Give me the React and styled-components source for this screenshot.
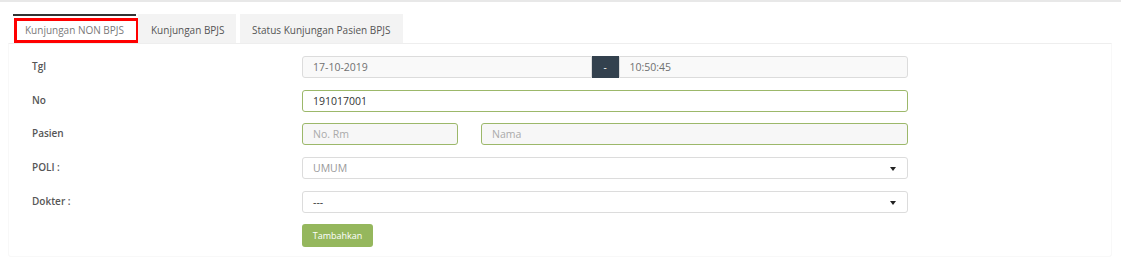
import React from "react";
import styled, { createGlobalStyle } from "styled-components";

const GlobalStyle = createGlobalStyle`
  html, body {
    margin: 0;
    padding: 0;
    background: #fff;
    font-family: "Open Sans", "Noto Sans", sans-serif;
  }
`;

const Page = styled.div`
  width: 1121px;
  height: 258px;
  box-sizing: border-box;
  border-top: 2px solid #e8e8e8;
  padding: 12px 9px 0 8px;
`;

const TabBar = styled.ul`
  display: flex;
  list-style: none;
  margin: 0;
  padding: 0 0 0 5px;
  gap: 2px;
`;

const Tab = styled.li`
  position: relative;
  box-sizing: border-box;
  width: ${(p) => p.$w}px;
  height: 29px;
  margin-right: ${(p) => p.$gap || 0}px;
  display: flex;
  align-items: center;
  padding-left: ${(p) => p.$pad}px;
  font-size: 10px;
  white-space: nowrap;
  background: ${(p) => (p.$active ? "#fff" : "#f3f3f3")};
  border-top: 2px solid ${(p) => (p.$active ? "#333" : "#f3f3f3")};
  color: ${(p) => (p.$active ? "#7a7a7a" : "#555")};
`;

const Highlight = styled.span`
  position: absolute;
  left: 1px;
  top: 2px;
  width: 125px;
  height: 25px;
  box-sizing: border-box;
  border: 3px solid #f00;
`;

const Panel = styled.div`
  box-sizing: border-box;
  height: 214px;
  border: 1px solid #f8f8f8;
  border-top-color: #eeeeee;
  border-radius: 0 0 3px 3px;
  padding: 12px 24px 0 23px;
`;

const Form = styled.div`
  display: grid;
  grid-template-columns: 270px 606px;
  row-gap: 11.7px;
  align-items: center;
`;

const Label = styled.label`
  font-size: 10px;
  font-weight: 600;
  color: #565656;
  margin-top: -2px;
`;

const Group = styled.div`
  display: flex;
  gap: ${(p) => p.$gap || 0}px;
`;

const Input = styled.div`
  box-sizing: border-box;
  height: 22px;
  flex: ${(p) => (p.$w ? `0 0 ${p.$w}px` : "1")};
  display: flex;
  align-items: center;
  padding-left: 10px;
  font-size: 10.5px;
  background: ${(p) => (p.$bg ? p.$bg : "#f9f9f9")};
  border: 1px solid ${(p) => (p.$ok ? "#9cb86a" : "#dcdcdc")};
  border-radius: ${(p) => p.$radius || "3px"};
  color: ${(p) => p.$color || "#707070"};
`;

const Addon = styled.div`
  width: 27px;
  height: 22px;
  display: flex;
  align-items: center;
  justify-content: center;
  background: #33414e;
  color: #fff;
  font-size: 10px;
`;

const Select = styled(Input)`
  position: relative;
  background: #fff;
  &::after {
    content: "";
    position: absolute;
    right: 11px;
    top: 9px;
    border-left: 3.5px solid transparent;
    border-right: 3.5px solid transparent;
    border-top: 4px solid #222;
  }
`;

const Button = styled.button`
  grid-column: 2;
  justify-self: start;
  height: 23px;
  width: 71px;
  border: 0;
  border-radius: 3px;
  background: #95b75d;
  color: #fff;
  font-family: inherit;
  font-size: 9px;
  padding: 0;
`;

export default function App() {
  return (
    <Page>
      <GlobalStyle />
      <TabBar>
        <Tab $active $w={123} $pad={12}>
          Kunjungan NON BPJS
          <Highlight />
        </Tab>
        <Tab $w={98} $pad={13} $gap={2}>
          Kunjungan BPJS
        </Tab>
        <Tab $w={163} $pad={12}>
          Status Kunjungan Pasien BPJS
        </Tab>
      </TabBar>
      <Panel>
        <Form>
          <Label>Tgl</Label>
          <Group>
            <Input $radius="3px 0 0 3px">17-10-2019</Input>
            <Addon>-</Addon>
            <Input $radius="0 3px 3px 0">10:50:45</Input>
          </Group>

          <Label>No</Label>
          <Input $ok $bg="#fff" $color="#333">
            191017001
          </Input>

          <Label>Pasien</Label>
          <Group $gap={23}>
            <Input $ok $w={156} $bg="#f7f7f7" $color="#aaa">
              No. Rm
            </Input>
            <Input $ok $bg="#f7f7f7" $color="#aaa">
              Nama
            </Input>
          </Group>

          <Label>POLI :</Label>
          <Select $color="#999">UMUM</Select>

          <Label>Dokter :</Label>
          <Select $color="#333">---</Select>

          <Button>Tambahkan</Button>
        </Form>
      </Panel>
    </Page>
  );
}
